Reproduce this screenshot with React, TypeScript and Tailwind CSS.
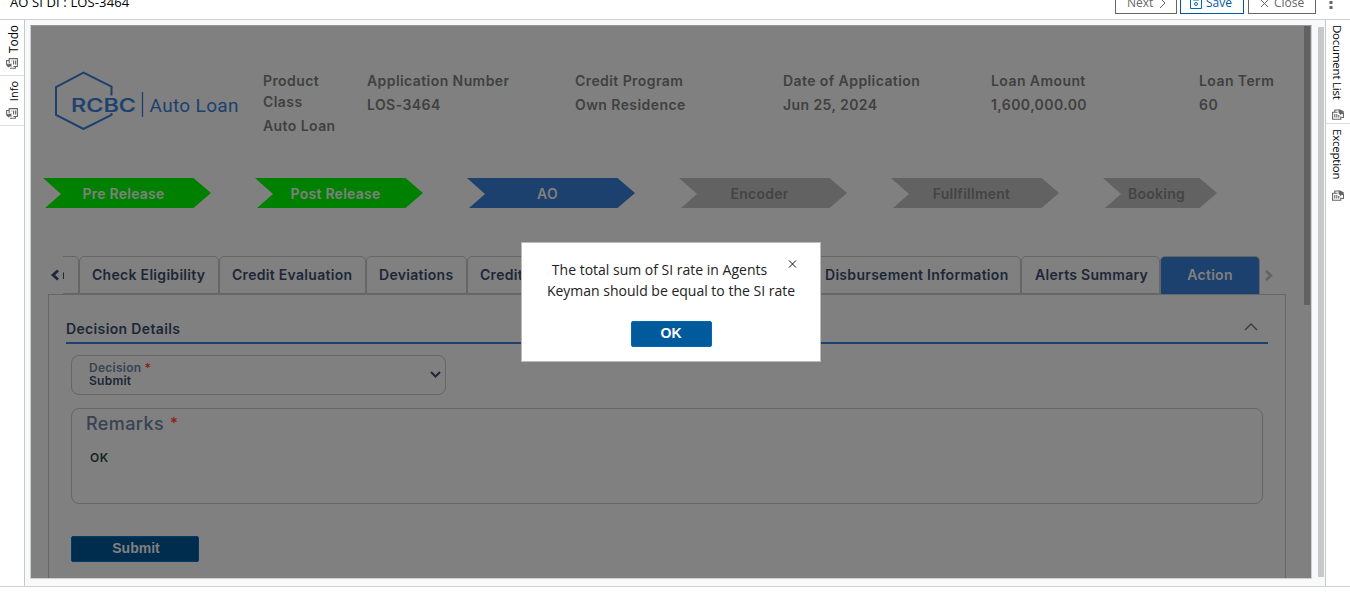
import React from 'react';

const body = "font-['Inter','Liberation_Sans',sans-serif]";

function PanelIcon({ flip = false }: { flip?: boolean }) {
  if (flip) {
    return (
      <svg width="12" height="11" viewBox="0 0 12 11" fill="none" stroke="#666" strokeWidth="1.1" className="shrink-0">
        <path d="M5.500 3.200H.6v7h8.200V7.500M2.800 3V1h5.500M2.800 5v3.500M4.800 5v3.500M6.800 6v2.500M9.500 8.500h2V4" />
        <path d="M6.500 1.500l1.500-1 3.700 1.700v3.300L10 4.800 8.500 6 6.500 3.500z" fill="#666" stroke="none" />
      </svg>
    );
  }
  return (
    <svg width="12" height="11" viewBox="0 0 12 11" fill="none" stroke="#666" strokeWidth="1.1" className="shrink-0">
      <path d="M3.200 5.500V.6h8.200v7.900H7.500M3 2.500H.6V6M4 10.200h5.400V8.500M5.500 3h.8M7.600 2.500v4M9.600 2.500v4" />
      <path d="M.3 5.500l2 .7 3.200-.7V9L4.200 8.300 2.600 9.500.3 7.500z" fill="#666" stroke="none" />
    </svg>
  );
}

function Logo() {
  return (
    <svg width="186" height="60" viewBox="0 0 186 60" className="shrink-0">
      <path d="M57.500 25.500V16.500L29.500 2.500 2 17v28l27.500 14L57.500 45V43" fill="none" stroke="#1c416e" strokeWidth="2" />
      <path d="M88.500 22v25" stroke="#1c416e" strokeWidth="1.300" />
      <text x="17" y="41.500" textLength="65" lengthAdjust="spacingAndGlyphs" fontFamily="Inter, sans-serif" fontSize="19" fontWeight="500" stroke="#1c416e" strokeWidth=".2" fill="#1c416e">RCBC</text>
      <text x="95.500" y="41.500" textLength="89" lengthAdjust="spacing" fontFamily="Roboto, sans-serif" fontSize="19" fill="#1c416e">Auto Loan</text>
    </svg>
  );
}

const info = [
  ['Application Number', 'LOS-3464'],
  ['Credit Program', 'Own Residence'],
  ['Date of Application', 'Jun 25, 2024'],
  ['Loan Amount', '1,600,000.00'],
  ['Loan Term', '60'],
];

const steps = [
  ['Pre Release', '#008000', '#808080', 168],
  ['Post Release', '#008000', '#808080', 168],
  ['AO', '#1c416e', '#808080', 168],
  ['Encoder', '#626262', '#444444', 168],
  ['Fullfillment', '#626262', '#444444', 168],
  ['Booking', '#626262', '#444444', 114],
] as const;

function Step({ label, fill, color, width }: { label: string; fill: string; color: string; width: number }) {
  const tip = width - 17.5;
  return (
    <div className="grid h-[30px] shrink-0 place-items-center" style={{ width, color }}>
      <svg width={width} height="30" className="col-start-1 row-start-1">
        <path d={`M0 0H${tip}L${width} 15L${tip} 30H2L18 16Z`} fill={fill} />
      </svg>
      <span className="relative col-start-1 row-start-1 pt-px pr-[7px] text-[14px] font-semibold tracking-[0.25px]">{label}</span>
    </div>
  );
}

function Tab({ label, className }: { label: string; className: string }) {
  return (
    <div className={`flex h-[38px] shrink-0 items-center rounded-t-[5px] border border-[#666] pb-0.5 text-[14px] font-semibold tracking-[0.3px] whitespace-nowrap text-[#1c2737] ${className}`}>
      {label}
    </div>
  );
}

export default function App() {
  return (
    <div className="flex h-[602px] w-[1350px] flex-col overflow-hidden bg-white font-['Open_Sans',sans-serif]">
      <header className="flex h-5 shrink-0 items-end justify-between overflow-hidden border-b border-[#d0d0d0] pb-[5px] pl-2.5 text-[13px] text-black">
        <span className="h-[22px] leading-[20px] tracking-[0.12px]">AO SI DI : LOS-3464</span>
        <div className="flex gap-[3px] text-[12px]">
          <div className="flex h-[26px] w-[62px] items-center gap-1.5 border border-[#666] pt-1 pl-[11px] text-[#666]">Next
            <svg width="7" height="12" fill="none" stroke="#666"><path d="M1 1l5 5-5 5" /></svg>
          </div>
          <div className="flex h-[26px] w-[64px] items-center gap-1 border border-[#005a9c] pt-1 pl-[9px] text-[#005a9c]">
            <svg width="12" height="12" fill="none" stroke="#0069b4"><path d="M.5 .5h11v11H.5zM3 .5V3h6V.5" /><circle cx="6" cy="7" r="1.500" /></svg>Save
          </div>
          <div className="ml-px flex h-[26px] w-[68px] items-center gap-[5px] border border-[#666] pt-1 pl-[11px] text-[#666]">
            <svg width="9" height="9" stroke="#666"><path d="M1 1l7 7M8 1L1 8" /></svg>Close
          </div>
          <svg width="31" height="26"><path d="M10.500 13h3v3h-3zM10.500 18h3v3h-3z" fill="#666" /></svg>
        </div>
      </header>
      <div className="flex h-[567px] shrink-0 border-b border-[#d0d0d0] text-[11.500px] text-black">
        <aside className="w-[25px] border-r border-[#c8c8c8] bg-white">
          <div className="flex h-[56px] flex-col items-center justify-between border-b border-[#ddd] pt-[5px] pb-[6px] leading-4">
            <span className="ml-[3px] rotate-180 text-[12px] tracking-[-0.1px] [writing-mode:vertical-rl]">Todo</span><PanelIcon />
          </div>
          <div className="flex h-[50px] flex-col items-center justify-between border-b border-[#ddd] pt-[5px] pb-[6px] leading-4">
            <span className="ml-[3px] rotate-180 text-[11px] [writing-mode:vertical-rl]">Info</span><PanelIcon />
          </div>
        </aside>
        <div className="flex w-[1300px] bg-[#f8f9fb] pt-[5px] pl-[5px]">
          <main className={`h-[554px] w-[1282px] overflow-hidden border border-[#d0d0d0] border-t-[#999] bg-[#808080] ${body}`}>
            <div className="flex h-full">
              <div className="w-[1273px] shrink-0">
                <div className="flex h-[110px] pt-[44px] pl-[23px]">
                  <Logo />
                  <div className="-mt-px flex pl-[23px] text-[14px] leading-6 font-semibold tracking-[0.42px] text-[#404040]">
                    <div className="w-[104px]"><div className="w-20 pt-[1px] leading-[21px]">Product Class</div><div className="pt-[2px]">Auto Loan</div></div>
                    {info.map(([name, value]) => <div className="w-[208px] shrink-0 whitespace-nowrap" key={name}><div>{name}</div><div>{value}</div></div>)}
                  </div>
                </div>
                <div className="mt-[42px] flex gap-[44px] pl-[12px]">
                  {steps.map(([label, fill, color, width]) => <Step key={label} label={label} fill={fill} color={color} width={width} />)}
                </div>
                <div className="mt-[48px] flex items-center pl-[18px]">
                  <svg width="15" height="14" className="-mr-px shrink-0" fill="none" stroke="#1c2737"><path d="M9 2.500L4 7l5 4.500" strokeWidth="2.800" /><path d="M14.500 4.500V11" strokeWidth="1" /></svg>
                  <div className="h-[38px] w-4 shrink-0 rounded-tr-[5px] border border-l-0 border-[#666]" />
                  <Tab label="Check Eligibility" className="w-[140px] pl-3" />
                  <Tab label="Credit Evaluation" className="w-[147px] pl-3" />
                  <Tab label="Deviations" className="w-[101px] pl-3" />
                  <Tab label="Credit" className="w-[344px] pl-3" />
                  <Tab label="Disbursement Information" className="w-[210px] pl-[13px]" />
                  <Tab label="Alerts Summary" className="w-[139px] pl-[13px]" />
                  <div className="flex h-[38px] w-[100px] items-center justify-center rounded-t-[5px] border border-b-0 border-[#666] bg-[#1c416e] pb-0.5 text-[14px] font-semibold tracking-[0.3px] text-[#808080]">Action</div>
                  <svg width="14" height="14" className="ml-1 shrink-0" fill="none" stroke="#5f6266" strokeWidth="2.500"><path d="M2 3l5 4.500-5 4.500" /></svg>
                </div>
                <section className="ml-[17px] h-[300px] w-[1238px] border border-[#666] px-[17px] text-[#1c2737]">
                  <div className="flex h-[49px] items-end justify-between border-b-2 border-[#1c416e] pb-[3px] text-[14px] font-semibold tracking-[0.35px]"><span>Decision Details</span>
                    <svg width="14" height="20" className="mr-[10px] mb-0.5" fill="none" stroke="#303a48" strokeWidth="1.300"><path d="M1 13l6-6 6 6" /></svg>
                  </div>
                  <div className="mt-[11px] ml-[5px] flex h-[40px] w-[375px] items-center justify-between rounded-lg border border-[#666] pr-1 pl-[17px] text-[12px] leading-[13px] font-semibold tracking-[0.25px]">
                    <div className="pb-[2px]"><div className="text-[#374253]">Decision <span className="text-[#8b211c]">*</span></div><div>Submit</div></div>
                    <svg width="11" height="8" fill="none" stroke="#1c2737" strokeWidth="2"><path d="M1 1l4.500 4.500L10 1" /></svg>
                  </div>
                  <div className="mt-[13px] ml-[5px] h-[96px] w-[1192px] rounded-lg border border-[#666] pt-px pl-[14px] font-medium">
                    <div className="flex text-[18px] tracking-[0.4px] text-[#374253]">Remarks <span className="pl-[6px] text-[15px] leading-[25px] text-[#8b211c]">*</span></div>
                    <div className="pt-[12px] pl-[4px] text-[12px] font-semibold tracking-[0.5px] text-[#142521]">OK</div>
                  </div>
                  <div className="mt-[32px] ml-[5px] flex h-[26px] w-[128px] items-center justify-center rounded-[2px] border border-[#003b68] bg-[#002c4e] pb-0.5 pl-[2px] font-['Liberation_Sans',sans-serif] text-[14px] font-bold text-[#808080]">Submit</div>
                </section>
              </div>
              <div className="h-[279px] w-[6px] bg-[#626262]" />
            </div>
          </main>
          <div className="mt-[2px] ml-[6px] h-[550px] w-[6px] bg-[#c8c8c8]" />
        </div>
        <aside className="w-[25px] border-l border-[#c8c8c8] bg-white">
          <div className="flex h-[104px] flex-col items-center justify-between border-b border-[#ddd] pt-[5px] pb-[3px] leading-4"><span className="mr-[3px] text-[11.500px] tracking-[-0.22px] [writing-mode:vertical-rl]">Document List</span><PanelIcon flip /></div>
          <div className="flex h-[77px] flex-col items-center justify-between pt-[5px] leading-4"><span className="mr-[3px] text-[11.500px] tracking-[-0.22px] [writing-mode:vertical-rl]">Exception</span><PanelIcon flip /></div>
        </aside>
      </div>
      <div role="dialog" className="absolute top-[242px] left-[521px] h-[120px] w-[300px] border border-[#bbb] bg-white text-center text-[14px] leading-[21px] text-[#222]">
        <div className="pt-[16px] pr-[23px]">The total sum of SI rate in Agents</div>
        <div>Keyman should be equal to the SI rate</div>
        <svg className="absolute top-[17px] left-[266px]" width="9" height="8" stroke="#111"><path d="M1 .5l7 7M8 .5L1 7.500" /></svg>
        <button className="mt-[20px] block h-[26px] w-[81px] mx-auto translate-x-0 rounded-[2px] border border-[#0069b4] bg-[#005a9c] pb-0.5 font-['Liberation_Sans',sans-serif] text-[14px] leading-[21px] font-bold text-white">OK</button>
      </div>
    </div>
  );
}
